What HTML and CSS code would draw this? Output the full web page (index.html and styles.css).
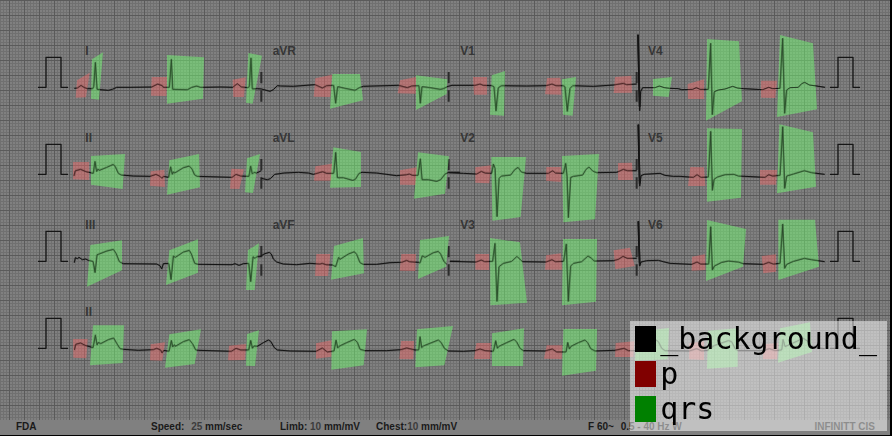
FILE: index.html
```html
<!DOCTYPE html>
<html lang="en">
<head>
<meta charset="utf-8">
<title>ECG segmentation</title>
<link rel="stylesheet" href="styles.css">
</head>
<body>
<main class="sheet">
<svg class="chart" viewBox="0 0 2670 1260" role="img" aria-label="12-lead ECG">
  <defs>
    <pattern id="minor" width="9" height="9" patternUnits="userSpaceOnUse">
      <path class="grid-minor" d="M0 0H9V3H0ZM0 3H3V9H0Z"/>
    </pattern>
    <pattern id="major" width="45" height="45" patternUnits="userSpaceOnUse">
      <path class="grid-major" d="M0 0H45V3H0ZM27 3H30V45H27Z"/>
    </pattern>
    <path id="pulse" d="M114 262H138V172H183V262H204"/>
    <path id="ticks" d="M784 216V250M784 271V305M1346 216V250M1346 271V305M1910 216V250M1910 271V305"/>
  </defs>
  <rect width="2670" height="1260" fill="url(#minor)"/>
  <rect width="2670" height="1260" fill="url(#major)"/>

  <g class="labels">
    <text x="256" y="164">I</text><text x="818" y="164">aVR</text><text x="1381" y="164">V1</text><text x="1944" y="164">V4</text>
    <text x="256" y="425">II</text><text x="818" y="425">aVL</text><text x="1381" y="425">V2</text><text x="1944" y="425">V5</text>
    <text x="256" y="686">III</text><text x="818" y="686">aVF</text><text x="1381" y="686">V3</text><text x="1944" y="686">V6</text>
    <text x="256" y="947">II</text>
  </g>

  <g class="pulses">
    <use href="#pulse"/><use href="#pulse" y="261"/><use href="#pulse" y="522"/><use href="#pulse" y="783"/>
    <use href="#pulse" x="2376"/><use href="#pulse" x="2376" y="261"/><use href="#pulse" x="2376" y="522"/><use href="#pulse" x="2376" y="783"/>
  </g>
  <g class="ticks">
    <use href="#ticks"/><use href="#ticks" y="261"/><use href="#ticks" y="522"/>
  </g>

  <g class="traces" id="traces">
    <path transform="translate(0 60)" d="M223 205L232 204L243 196L252 202L262 206L278 206L281 200L286 127L291 208L325 211L337 208L350 202L390 202L455 201L473 192L487 197L490 202L508 202L514 118L518 208L562 209L575 202L590 198L602 202L660 201"/>
    <path transform="translate(660 60)" d="M0 201L38 202L52 191L64 201L84 203L88 200L93 114L97 207L112 206L124 207L150 214L160 209L172 197L182 198L220 199L285 194L307 204L320 197L341 196L347 250L353 200L375 205L405 211L418 203L430 199L535 196L562 203L575 198L597 197L601 250L606 200L630 203L660 208"/>
    <path transform="translate(1320 60)" d="M0 208L10 206L24 199L36 196L105 196L120 192L130 196L156 197L162 200L168 273L175 203L184 197L260 198L318 197L336 192L348 197L370 197L375 200L382 274L390 205L398 197L460 199L520 195L550 190L560 194L590 192"/>
    <path transform="translate(1890 60)" d="M24 44L29 272L32 215L38 203L75 203L88 198L103 203L120 205L145 206L155 209L188 208L199 203L210 208L235 208L242 70L247 284L253 215L265 210L285 207L308 199L322 204L340 206L398 209L416 202L428 206L450 205L458 55L464 280L470 210L480 203L505 202L515 191L524 187L538 195L560 198L585 202"/>

    <path transform="translate(90 360)" d="M132 168L136 152L152 148L168 155L190 160L195 124L200 155L204 147L208 151L230 142L250 133L256 140L265 160L274 165L310 168L360 169L378 163L390 169L396 175L400 169L416 172L422 140L427 163L431 155L434 159L460 143L478 138L486 147L494 165L502 169L606 172L618 163L632 168L657 169L662 138L667 162L672 157L680 159L694 152"/>
    <path transform="translate(780 360)" d="M4 175L22 179L31 176L44 163L72 159L115 157L145 159L160 163L188 155L200 160L221 160L227 97L232 173L250 173L278 181L286 178L297 160L306 157L350 159L410 167L440 164L448 162L458 166L474 166L481 116L486 179L505 179L530 184L542 179L555 162L566 157L600 157"/>
    <path transform="translate(1320 360)" d="M25 158L70 160L110 162L124 154L135 159L155 160L160 132L165 145L171 290L177 175L184 168L212 165L224 149L234 142L244 156L260 160L325 160L338 152L346 159L370 160L377 130L381 170L385 293L392 172L400 169L428 165L438 148L447 141L458 153L470 158L530 157L550 148L562 152L590 152"/>
    <path transform="translate(1890 360)" d="M25 13L29 198L33 167L42 163L90 160L105 166L130 169L150 169L190 172L201 164L213 172L235 171L242 34L247 211L252 178L262 171L285 164L312 163L325 168L405 172L416 164L428 168L450 166L458 20L464 205L470 168L490 162L523 152L545 158L584 163"/>

    <path transform="translate(90 360)" d="M133 428L136 413L142 416L147 412L157 419L167 417L175 421L189 424L195 458L201 404L207 402L230 393L250 388L258 400L268 425L280 431L380 432L390 437L395 447L400 431L416 430L423 479L430 408L436 412L460 396L478 391L484 402L494 430L505 433L606 434L615 431L627 436L640 431L656 430L662 485L669 410L675 415L680 410L691 410"/>
    <path transform="translate(780 360)" d="M0 410L12 402L28 397L34 402L40 417L50 426L70 432L110 434L150 430L180 432L187 430L198 434L218 435L227 440L236 412L240 418L265 402L283 395L290 403L300 428L310 433L350 433L390 428L425 427L440 421L448 425L475 427L480 429L487 407L495 412L520 398L535 394L542 402L552 425L560 432M570 424L600 424"/>
    <path transform="translate(1320 360)" d="M30 424L108 426L124 420L134 425L158 424L165 370L171 544L177 440L190 430L215 424L231 409L242 420L248 425L318 426L336 419L346 425L371 424L379 372L385 544L392 438L400 430L425 425L444 408L455 415L462 423L520 422L535 418L549 409L562 415L590 415"/>
    <path transform="translate(1890 360)" d="M25 304L29 438L33 426L50 422L85 421L100 425L120 430L185 433L201 426L212 432L236 432L242 320L247 450L253 438L275 427L295 423L325 426L340 431L400 433L416 427L430 432L450 430L458 312L464 445L470 433L490 424L523 415L545 419L584 425"/>

    <path transform="translate(90 900)" d="M133 150L137 133L152 129L165 136L189 143L196 105L201 135L205 127L212 131L235 119L251 114L260 130L270 146L280 148L325 151L370 149L380 145L392 150L396 159L401 151L417 154L424 121L428 141L433 134L436 139L460 125L478 119L488 132L497 150L505 151L604 154L618 145L632 150L656 150L662 121L667 145L672 138L682 139L700 128L715 120L722 124L733 143L742 150L780 153L858 154"/>
    <path transform="translate(900 900)" d="M48 154L67 144L82 156L102 153L108 120L113 144L117 139L140 128L163 118L172 127L180 148L195 152L260 152L303 149L320 144L345 150L356 150L360 110L365 143L370 138L390 130L415 120L423 127L433 145L445 153L490 154L525 152L540 147L555 152L580 154L587 122L592 145L597 139L620 128L642 118L650 126L660 145L670 152L735 153L757 147L770 156L798 156L803 127L808 147L813 139L835 128L855 120L863 128L872 146L885 153L945 151"/>
    <path transform="translate(1800 900)" d="M45 151L72 145L85 152L112 152L118 125L122 142L165 118L175 125L185 145L195 152L268 153L290 146L305 153L325 151L331 122L336 142L342 137L385 122L395 125L405 146L415 152L490 152L508 146L525 152L545 150L549 118L555 140L610 115L625 125L635 142L674 146"/>
    <path class="stem" d="M1914 104L1919 320M1915 374L1919 550M1915 664L1919 790"/>
  </g>

  <g class="wave-p">
    <path transform="translate(0 60)" d="M231 181L269 158L258 232L227 233ZM455 171L501 171L499 228L453 227Z"/>
    <path transform="translate(660 60)" d="M38 179L77 172L72 231L40 231ZM286 175L336 164L331 231L281 230ZM540 181L588 171L587 221L533 220Z"/>
    <path transform="translate(1320 60)" d="M99 171L141 171L141 224L102 224ZM321 174L361 173L364 224L315 223ZM525 171L574 167L576 218L521 219Z"/>
    <path transform="translate(1890 60)" d="M173 192L222 178L222 237L174 237ZM393 182L441 182L436 234L393 233Z"/>
    <path transform="translate(90 360)" d="M129 126L177 126L177 180L129 178ZM362 154L403 149L405 201L360 197ZM604 146L642 148L628 207L600 206Z"/>
    <path transform="translate(780 360)" d="M166 139L216 131L214 182L162 182ZM420 151L470 142L467 195L420 194ZM169 402L211 402L204 468L165 468ZM424 402L468 402L466 453L419 452Z"/>
    <path transform="translate(1320 360)" d="M106 142L153 136L148 190L106 188ZM319 141L363 141L363 186L318 182ZM534 129L576 128L579 180L534 180ZM106 402L147 402L147 450L106 449ZM318 406L363 400L366 449L315 449ZM521 391L570 383L584 438L526 448Z"/>
    <path transform="translate(1890 360)" d="M181 141L222 142L226 198L174 198ZM390 150L441 150L438 194L390 194ZM186 410L225 403L226 450L185 452ZM395 408L438 403L438 455L400 460Z"/>
    <path transform="translate(90 900)" d="M129 117L173 117L169 175L130 173ZM362 133L405 127L397 182L360 181ZM597 137L648 132L645 180L594 181Z"/>
    <path transform="translate(900 900)" d="M48 130L94 121L94 170L48 176ZM303 123L342 123L340 178L298 177ZM529 129L573 129L570 177L522 177ZM740 136L787 136L785 177L732 176Z"/>
    <path transform="translate(1800 900)" d="M47 129L103 124L100 171L45 171ZM268 130L312 124L312 180L267 178ZM490 133L534 129L531 178L489 177Z"/>
  </g>

  <g class="wave-qrs">
    <path transform="translate(0 60)" d="M276 118L309 97L297 239L273 236ZM501 105L612 112L609 236L501 251Z"/>
    <path transform="translate(660 60)" d="M85 99L126 107L98 251L78 248ZM337 162L420 162L429 241L330 266ZM588 166L682 178L680 222L588 270Z"/>
    <path transform="translate(1320 60)" d="M155 166L195 153L192 287L150 284ZM366 178L408 171L398 287L369 284Z"/>
    <path transform="translate(1890 60)" d="M69 177L126 171L116 231L69 227ZM231 57L327 64L336 244L228 302ZM450 45L549 70L561 268L441 291Z"/>
    <path transform="translate(90 360)" d="M183 108L285 102L278 207L183 194ZM418 121L507 102L510 202L411 224ZM651 115L690 102L669 219L645 217ZM181 375L276 361L276 451L171 500ZM418 391L504 358L504 458L408 495ZM654 390L687 370L674 510L648 510Z"/>
    <path transform="translate(780 360)" d="M220 82L303 96L303 201L210 203ZM474 97L567 109L555 221L462 236ZM222 378L309 354L312 460L213 479ZM480 360L567 348L558 440L474 477Z"/>
    <path transform="translate(1320 360)" d="M154 111L258 111L242 291L157 302ZM366 108L477 102L465 298L370 307ZM150 354L240 367L261 548L151 556ZM369 357L471 357L468 545L366 556Z"/>
    <path transform="translate(1890 360)" d="M231 25L336 27L333 233L231 245ZM448 13L549 37L558 200L441 220ZM231 300L348 327L339 440L228 483ZM445 299L555 299L567 440L445 480Z"/>
    <path transform="translate(90 900)" d="M189 76L282 76L278 189L180 196ZM418 103L513 88L494 192L405 203ZM651 102L687 91L675 198L648 197Z"/>
    <path transform="translate(900 900)" d="M96 94L201 88L191 196L94 209ZM351 88L459 78L433 196L346 202ZM576 100L672 85L669 198L576 198ZM790 87L891 87L888 212L786 227Z"/>
    <path transform="translate(1800 900)" d="M110 95L207 84L203 178L105 182ZM324 92L413 85L413 200L321 206ZM540 85L630 67L636 156L534 188Z"/>
  </g>
  <use class="traces-over" href="#traces"/>
</svg>

<footer class="status">
  <span>FDA</span>
  <span class="pair">Speed: <span><span class="value">25</span> mm/sec</span></span>
  <span class="limb">Limb: <span class="value">10</span> mm/mV</span>
  <span>Chest:<span class="value">10</span> mm/mV</span>
  <span class="pair">F 60~ <span>0.5 - 40 Hz W</span></span>
  <span class="brand">INFINITT CIS</span>
</footer>

<ul class="legend">
  <li><span class="swatch swatch-background"></span>_background_</li>
  <li><span class="swatch swatch-p"></span>p</li>
  <li><span class="swatch swatch-qrs"></span>qrs</li>
</ul>
</main>
</body>
</html>
```
FILE: styles.css
```css
* { box-sizing: border-box; }

body {
  margin: 0;
  background: #000;
}

.sheet {
  position: relative;
  border-right: 2px solid #000;
  border-bottom: 1px solid #000;
  background: #808080;
}

.chart {
  display: block;
  width: 100%;
  height: auto;
}

.grid-minor { fill: #000; fill-opacity: 0.12; }
.grid-major { fill: #000; fill-opacity: 0.2; }

.labels {
  font: bold 36px "Liberation Sans", Arial, sans-serif;
  fill: #363636;
}

.pulses, .ticks, .traces {
  fill: none;
  stroke: #151515;
  stroke-linejoin: round;
}

.pulses { stroke-width: 4px; }
.ticks { stroke: #2b2b2b; stroke-width: 6px; }
.traces { stroke-width: 3px; }
.stem { stroke-width: 5px; }
.traces-over { opacity: 0.6; }

.wave-p { fill: #ff6a6a; fill-opacity: 0.42; }
.wave-qrs { fill: #74ff74; fill-opacity: 0.48; }

.status {
  display: grid;
  grid-template-columns: 135px 129px 96px 212px 1fr auto;
  height: 15px;
  padding: 0 15px 0 16px;
  font: bold 10px/14px "Liberation Sans", Arial, sans-serif;
  color: #1a1a1a;
  white-space: pre;
}

.pair {
  display: flex;
  gap: 4px;
}

.value { color: #3c3c3c; }

.legend {
  position: absolute;
  right: 3px;
  bottom: 4px;
  margin: 0;
  padding: 0 10px 5px 5px;
  list-style: none;
  background: rgba(255, 255, 255, 0.5);
  font: 30px/35px "DejaVu Sans Mono", monospace;
  color: #000;
}

.legend li {
  display: flex;
  align-items: center;
  gap: 4px;
}

.swatch {
  width: 21px;
  height: 26px;
}

.swatch-background { background: #000; }
.swatch-p { background: #800000; }
.swatch-qrs { background: #008000; }
```
